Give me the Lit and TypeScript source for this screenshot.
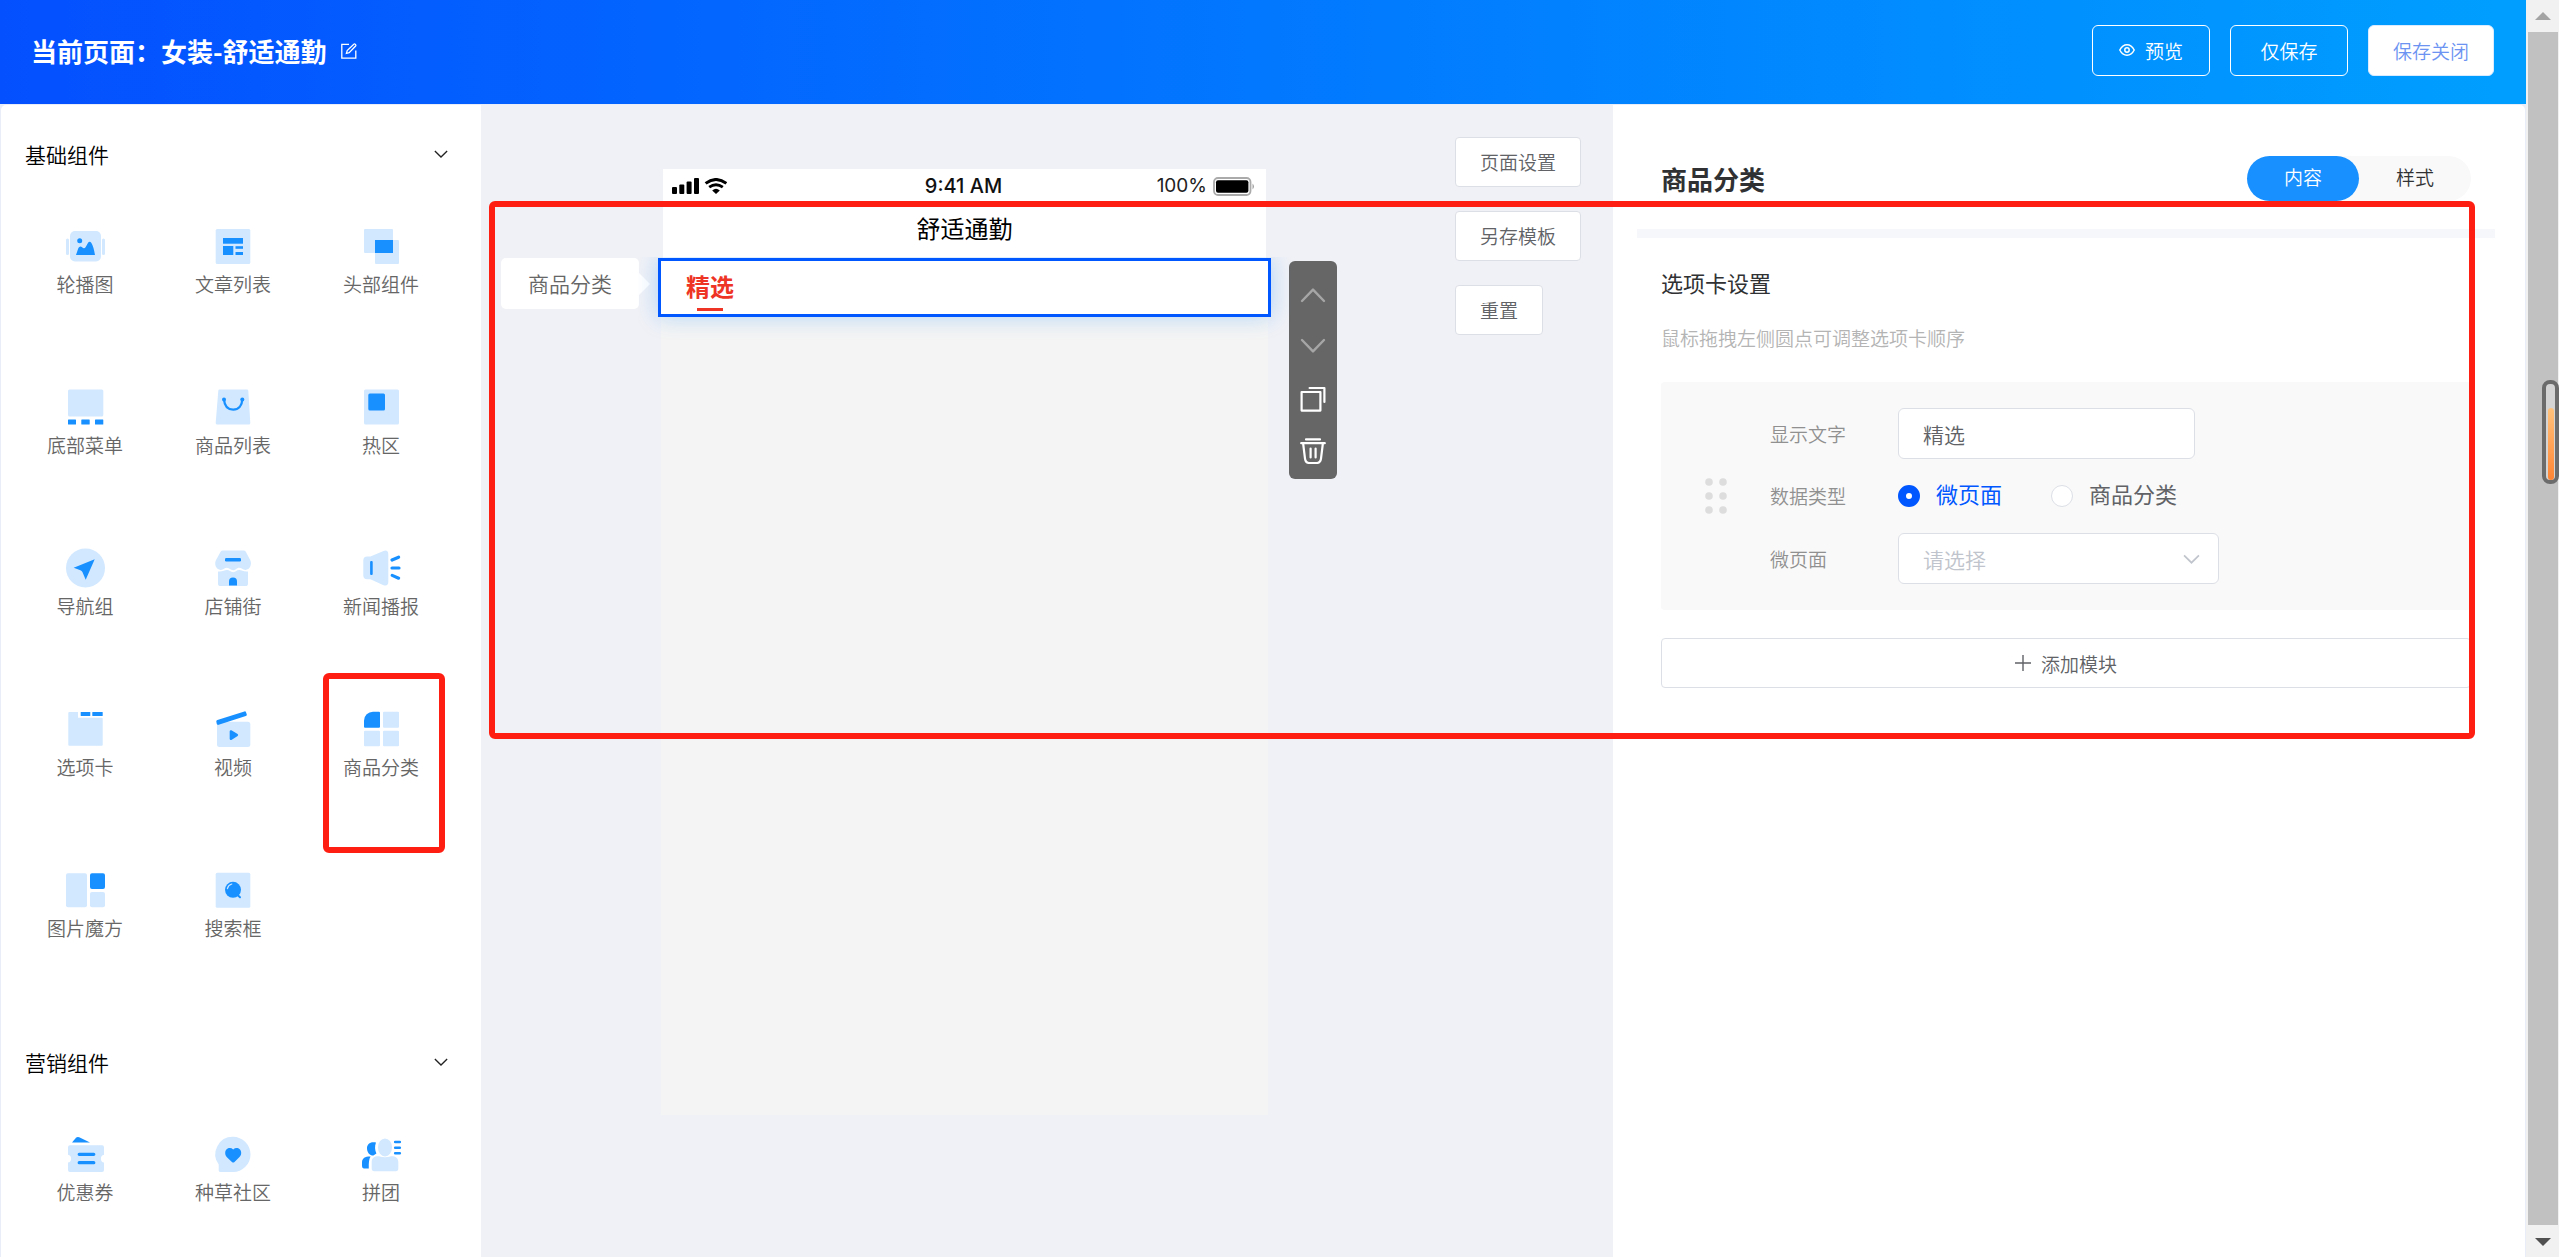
import { LitElement, html, svg, css, type TemplateResult } from "lit";
import { customElement, property, state } from "lit/decorators.js";
import { classMap } from "lit/directives/class-map.js";

type Tile = { name: string; icon: TemplateResult };

const basicTiles: Tile[] = [
  {
    name: "轮播图",
    icon: svg`
      <rect class="l" x="5" y="5" width="31" height="30.5" rx="5"/>
      <rect class="l" x="1" y="12.5" width="3" height="16.5" rx="1.5"/>
      <rect class="l" x="37" y="12.5" width="3" height="16.5" rx="1.5"/>
      <circle class="d" cx="14.7" cy="14.7" r="2.5"/>
      <path class="d" d="M11 29 13.4 22Q15 19 17.4 21.6 19.4 23.4 21 20.4L23.2 16.6Q24.8 14.6 26.4 17 28.6 20.6 30 29Z"/>`,
  },
  {
    name: "文章列表",
    icon: svg`
      <rect class="l" x="2.7" y="3" width="34.6" height="35" rx="1.5"/>
      <rect class="d" x="10" y="12" width="20" height="5.7"/>
      <rect class="d" x="10" y="20" width="10.3" height="9"/>
      <rect class="d" x="22.5" y="20.2" width="7.5" height="2.6"/>
      <rect class="d" x="22.5" y="26" width="7.5" height="3"/>`,
  },
  {
    name: "头部组件",
    icon: svg`
      <rect class="l" x="3" y="3" width="29" height="24" rx="1"/>
      <rect class="l" x="14" y="14" width="24" height="24" rx="1"/>
      <rect class="d" x="14" y="14" width="18" height="13"/>`,
  },
  {
    name: "底部菜单",
    icon: svg`
      <rect class="l" x="3" y="2.5" width="35.3" height="27" rx="1.5"/>
      <rect class="d" x="3" y="32.5" width="8" height="5" rx=".5"/>
      <rect class="d" x="16.3" y="32.5" width="8.4" height="5" rx=".5"/>
      <rect class="d" x="30" y="32.5" width="8.3" height="5" rx=".5"/>`,
  },
  {
    name: "商品列表",
    icon: svg`
      <path class="l" d="M6.6 2.5H34Q35.2 2.5 35.3 3.8L37.3 36Q37.3 37.5 35.8 37.5H4.2Q2.7 37.5 2.7 36L5.3 3.8Q5.4 2.5 6.6 2.5Z"/>
      <path class="ds" stroke-width="2.3" d="M11 12.5C11.5 19 15 22.6 20.2 22.6S29 19 29.3 12.5"/>
      <circle class="d" cx="11" cy="12.5" r="2"/><circle class="d" cx="29.3" cy="12.5" r="2"/>`,
  },
  {
    name: "热区",
    icon: svg`
      <rect class="l" x="3" y="2.5" width="35" height="35" rx="1.5"/>
      <rect class="d" x="7.3" y="6.5" width="16.7" height="17" rx="1.5"/>`,
  },
  {
    name: "导航组",
    icon: svg`
      <circle class="l" cx="20.5" cy="20" r="19.5"/>
      <path class="d" d="M29.7 11.2 8.7 19.8 15.4 22.3Q16.8 22.8 17.4 24L20.7 31.8Z"/>`,
  },
  {
    name: "店铺街",
    icon: svg`
      <path class="l" d="M9.8 2.5H30.6Q32 2.5 32.8 3.8L37.4 12.6C39 17 36.8 21.6 32.4 22 29.6 22 28.6 19.8 26.2 19.8 23.4 19.8 23 22.2 20.2 22.2S16.6 19.8 14 19.8C11.4 19.8 10.6 22 7.8 22 3.4 21.6 1 17 2.8 12.6L7.6 3.8Q8.4 2.5 9.8 2.5Z"/>
      <path class="l" d="M5 23.4C9 24.2 11.4 22 14 22S17.4 24.2 20.2 24.2 23.6 22 26.2 22 31 24.2 35 23.4V35.4Q35 38 32.4 38H7.6Q5 38 5 35.4Z"/>
      <rect class="d" x="12" y="10" width="16" height="3.4" rx="1.2"/>
      <path class="d" d="M16 37.6V33.4A4 4 0 0 1 24 33.4V37.6Z"/>`,
  },
  {
    name: "新闻播报",
    icon: svg`
      <path class="l" d="M2.3 12.5Q2.3 8.5 6.3 8.5H9.4L22.6 2.9Q27.3 1.6 27.3 6.4V33.8Q27.3 38.6 22.6 37.2L9.4 31.2H6.3Q2.3 31.2 2.3 27.2Z"/>
      <rect class="d" x="9.1" y="13" width="2.6" height="14" rx="1"/>
      <path class="ds" stroke-width="3.2" d="M31 12 37.6 9.2M31 20H38M31.2 27.4 37.6 30.2"/>`,
  },
  {
    name: "选项卡",
    icon: svg`
      <path class="l" d="M4.3 3H13V8.7H36.7Q37.7 8.7 37.7 9.7V35.7Q37.7 36.7 36.7 36.7H4.3Q3.3 36.7 3.3 35.7V4Q3.3 3 4.3 3Z"/>
      <rect class="d" x="15.7" y="3" width="9.6" height="4" rx=".5"/>
      <rect class="d" x="27.3" y="3" width="10.4" height="4" rx=".5"/>`,
  },
  {
    name: "视频",
    icon: svg`
      <rect class="l" x="4" y="12.7" width="33.3" height="25.3" rx="2.5"/>
      <path class="d" d="M3.3 12.4Q3.3 11.4 4.4 11L31.4 2.4Q32.6 2 33 3.2L33.8 5.4Q34 6.6 32.8 7L4.9 16Q3.4 15 3.3 12.4Z"/>
      <path class="d" d="M16.7 22.4Q16.8 20.8 18.4 21.3L24.6 25Q25.6 26 24.6 27L18.4 30.9Q16.8 31.4 16.7 29.8Z"/>`,
  },
  {
    name: "商品分类",
    icon: svg`
      <path class="d" d="M3 11.7A9 9 0 0 1 12 2.7H18Q19 2.7 19 3.7V17.7Q19 18.7 18 18.7H4Q3 18.7 3 17.7Z"/>
      <rect class="l" x="22" y="2.7" width="16" height="16" rx="1"/>
      <rect class="l" x="3" y="21.7" width="16" height="15.6" rx="1"/>
      <rect class="l" x="22" y="21.7" width="16" height="15.6" rx="1"/>`,
  },
  {
    name: "图片魔方",
    icon: svg`
      <rect class="l" x="1" y="3.3" width="21" height="34" rx="2"/>
      <rect class="d" x="25" y="3.3" width="15" height="15.6" rx="2"/>
      <rect class="l" x="25" y="22" width="15" height="15.3" rx="2"/>`,
  },
  {
    name: "搜索框",
    icon: svg`
      <rect class="l" x="2.7" y="2.7" width="34.6" height="35" rx="1.5"/>
      <circle class="d" cx="20" cy="19.8" r="8"/>
      <path class="ds" stroke-width="2" d="M24 24.4 27 27.2"/>
      <path class="ls" stroke-width="1.2" d="M14.4 18.6Q15.2 15 18.8 14"/>`,
  },
];

const marketingTiles: Tile[] = [
  {
    name: "优惠券",
    icon: svg`
      <path class="l" d="M5 11.3H37Q39 11.3 39 13.3V20.8A4 4 0 0 0 39 28.6V36Q39 38 37 38H5Q3 38 3 36V28.6A4 4 0 0 0 3 20.8V13.3Q3 11.3 5 11.3Z"/>
      <path class="d" d="M7 8.4 11 3.8Q12.3 2.4 14.2 3.2L25 8.4Z"/>
      <path class="ds" stroke-width="3.2" d="M14.2 20.3H28.8M14.2 28.7H28.8"/>`,
  },
  {
    name: "种草社区",
    icon: svg`
      <path class="l" d="M20 2.8A17.5 17.6 0 0 1 20 38H7Q5.7 38 5.7 36.6V30.4A17.4 17.4 0 0 1 20 2.8Z"/>
      <path class="d" d="M20.2 15.4C23.4 12.6 28.2 14.6 28.2 19 28.2 21.4 26.8 22.8 25 24.4L21.2 28.2Q20.2 29 19.2 28.2L15.2 24.4C13.4 22.8 12.2 21.4 12.2 19 12.2 14.6 17 12.6 20.2 15.4Z"/>`,
  },
  {
    name: "拼团",
    icon: svg`
      <path class="d" d="M15 8.6C13.6 12 13.8 16.4 15.4 19.4L12.4 21.6C8.4 21.4 6 18 6 14.4 6 10.4 9 7.4 15 8.6Z"/>
      <path class="d" d="M9.6 22.6C8 25 7.6 29 7.8 34.4H2.8Q1 34.2 1 32V28.4C1 24 4.6 22.4 9.6 22.6Z"/>
      <ellipse class="l" cx="24" cy="13.4" rx="7" ry="9"/>
      <path class="l" d="M18 22.2Q24 24.4 30 22.2C34.6 22 37.3 24 37.3 28V34.6Q37.3 37.2 34.8 37.2H13.2Q10.7 37.2 10.7 34.6V28C10.7 24 13.4 22 18 22.2Z"/>
      <path class="ds" stroke-width="2.6" d="M34.2 8H38.8M34.2 13.7H38.8M34.2 19.3H38.8"/>`,
  },
];

const chevronDown = svg`<path d="M1 1 8 8 15 1"/>`;

@customElement("tile-section")
class TileSection extends LitElement {
  @property() heading = "";
  @property({ attribute: false }) tiles: Tile[] = [];
  @state() private open = true;

  static styles = css`
    :host {
      display: block;
    }
    button {
      font: inherit;
      color: inherit;
      background: none;
      border: 0;
      padding: 0;
      cursor: pointer;
    }
    .head {
      display: flex;
      align-items: center;
      justify-content: space-between;
      width: 100%;
      height: 62px;
      padding: 0 33px 1px 24px;
      box-sizing: border-box;
      font-size: 21px;
      line-height: 30px;
      color: #000;
    }
    .chevron {
      width: 14px;
      height: 8px;
      fill: none;
      stroke: #222;
      stroke-width: 1.5;
    }
    .grid {
      display: grid;
      grid-template-columns: repeat(3, 1fr);
      grid-auto-rows: 161px;
      padding: 41px 26px 0 10px;
    }
    .tile {
      display: flex;
      flex-direction: column;
      align-items: center;
      gap: 4px;
      font-size: 19px;
      line-height: 28px;
      color: #666;
    }
    .icon {
      width: 40px;
      height: 40px;
      overflow: visible;
    }
    .l {
      fill: #d1e8ff;
    }
    .d {
      fill: #1890ff;
    }
    .ds,
    .ls {
      fill: none;
      stroke: #1890ff;
      stroke-linecap: round;
    }
    .ls {
      stroke: #d1e8ff;
    }
  `;

  render() {
    return html`
      <button class="head" aria-expanded=${this.open} @click=${() => (this.open = !this.open)}>
        <span>${this.heading}</span>
        <svg class="chevron" viewBox="0 0 16 9" aria-hidden="true">${chevronDown}</svg>
      </button>
      ${this.open
        ? html`<div class="grid">
            ${this.tiles.map(
              (t) => html`<button class="tile">
                <svg class="icon" viewBox="0 0 40 40" aria-hidden="true">${t.icon}</svg>
                <span>${t.name}</span>
              </button>`
            )}
          </div>`
        : null}
    `;
  }
}

@customElement("phone-preview")
class PhonePreview extends LitElement {
  static styles = css`
    :host {
      display: flex;
      align-items: flex-start;
    }
    .tag {
      position: relative;
      margin-top: 89px;
      padding: 0 27px 1px;
      line-height: 50px;
      font-size: 21px;
      color: #666;
      background: #fff;
      border-radius: 5px;
      white-space: nowrap;
    }
    .tag::after {
      content: "";
      position: absolute;
      left: 100%;
      top: 15px;
      border: 11px solid transparent;
      border-right-width: 0;
      border-left-color: #fff;
    }
    .phone {
      width: 613px;
      margin: 0 18px 0 19px;
    }
    .top {
      margin: 0 5px;
      background: #fff;
      height: 89px;
    }
    .status {
      display: grid;
      grid-template-columns: 1fr auto 1fr;
      align-items: center;
      height: 34px;
      padding: 0 11px 0 9px;
      font-family: Inter, "Liberation Sans", sans-serif;
    }
    .signal {
      width: 55px;
      height: 16px;
    }
    .time {
      font-size: 20px;
      font-weight: 500;
      line-height: 24px;
      color: #111;
    }
    .power {
      display: flex;
      align-items: center;
      justify-content: flex-end;
      gap: 6px;
      font-size: 19px;
      font-weight: 400;
      line-height: 24px;
      color: #222;
    }
    .battery {
      width: 42px;
      height: 19px;
    }
    .title {
      margin: 0;
      padding-top: 7px;
      font-size: 24px;
      font-weight: 400;
      line-height: 36px;
      text-align: center;
      color: #000;
    }
    .selected {
      display: flex;
      flex-direction: column;
      box-sizing: border-box;
      height: 59px;
      border: 3px solid #0057ff;
      background: #fff;
      padding: 7px 25px 0;
      box-shadow: 0 0 22px rgba(24, 144, 255, 0.3);
      clip-path: inset(-1px -20px -24px -20px);
      position: relative;
    }
    .tab {
      display: flex;
      flex-direction: column;
      align-items: center;
      align-self: flex-start;
      gap: 4px;
      font-size: 24px;
      font-weight: 700;
      line-height: 36px;
      color: #ee3424;
    }
    .tab::after {
      content: "";
      width: 26px;
      height: 3px;
      background: #ee3424;
    }
    .screen {
      margin: 0 3px;
      height: 798px;
      background: #f4f4f4;
    }
    .tools {
      display: flex;
      flex-direction: column;
      margin-top: 92px;
      padding: 8px 0 2px;
      background: #666;
      border-radius: 6px;
    }
    .tool {
      display: flex;
      align-items: center;
      justify-content: center;
      width: 48px;
      height: 52px;
      padding: 0;
      border: 0;
      background: none;
      cursor: pointer;
    }
    .tool svg {
      width: 26px;
      height: 26px;
      fill: none;
      stroke: #fff;
      stroke-width: 2.2;
      stroke-linecap: round;
      stroke-linejoin: round;
    }
    .tool:disabled svg {
      stroke: #a6a6a6;
      stroke-width: 2.4;
    }
  `;

  render() {
    return html`
      <div class="tag">商品分类</div>
      <div class="phone">
        <div class="top">
          <div class="status">
            <svg class="signal" viewBox="0 0 55 16" aria-hidden="true">
              <rect x="0" y="9" width="5" height="7" rx="1" />
              <rect x="7.3" y="6.5" width="5" height="9.5" rx="1" />
              <rect x="14.6" y="3.5" width="5" height="12.5" rx="1" />
              <rect x="22" y="0" width="5" height="16" rx="1" />
              <g fill="none" stroke="#000">
                <path stroke-width="3" d="M33.6 5.4Q44 -2.4 54.4 5.4" />
                <path stroke-width="2.8" d="M37.2 9.2Q44 4.2 50.8 9.2" />
              </g>
              <path d="M40.2 12.4Q44 9.2 47.8 12.4L44 16Z" />
            </svg>
            <span class="time">9:41 AM</span>
            <span class="power">
              <span>100%</span>
              <svg class="battery" viewBox="0 0 42 19" aria-hidden="true">
                <rect x="1" y="1" width="36.5" height="17" rx="4" fill="#fff" stroke="#aaa" stroke-width="1.8" />
                <rect x="3" y="3.2" width="32.4" height="12.6" rx="2" />
                <path d="M39.6 6.5Q42 9.5 39.6 12.5Z" fill="#888" />
              </svg>
            </span>
          </div>
          <h2 class="title">舒适通勤</h2>
        </div>
        <div class="selected"><span class="tab">精选</span></div>
        <div class="screen"></div>
      </div>
      <div class="tools">
        <button class="tool" disabled aria-label="上移">
          <svg viewBox="0 0 26 26"><path d="M2 19 13 7.6 24 19" /></svg>
        </button>
        <button class="tool" disabled aria-label="下移">
          <svg viewBox="0 0 26 26"><path d="M2 6 13 17.4 24 6" /></svg>
        </button>
        <button class="tool" aria-label="复制">
          <svg viewBox="0 0 26 26"><path d="M1.6 6H20.4V24.6H1.6ZM9.6 2H24.4V16" /></svg>
        </button>
        <button class="tool" aria-label="删除">
          <svg viewBox="0 0 26 26">
            <path d="M6 1.4H20M1.2 5.2H24.8M3.2 6 5 20.6Q5.6 25 9.4 25H16.6Q20.4 25 21 20.6L22.8 6M10.6 10.6V19.4M15.6 10.6V19.4" />
          </svg>
        </button>
      </div>
    `;
  }
}

@customElement("settings-panel")
class SettingsPanel extends LitElement {
  @state() private tab = "内容";
  @state() private kind = "微页面";

  static styles = css`
    :host {
      display: block;
      padding: 51px 30px 0 24px;
    }
    button,
    input,
    select {
      font: inherit;
      margin: 0;
      box-sizing: border-box;
    }
    .head {
      display: flex;
      justify-content: space-between;
      align-items: flex-start;
      padding: 0 24px 27px;
    }
    h1 {
      margin: 0;
      font-size: 26px;
      font-weight: 700;
      line-height: 46px;
      color: #303133;
    }
    .tabs {
      display: flex;
      border-radius: 23px;
      background: #f9f9f9;
    }
    .tabs button {
      width: 112px;
      height: 45px;
      padding: 0 0 5px;
      border: 0;
      border-radius: 23px;
      background: none;
      font-size: 19px;
      color: #303133;
      cursor: pointer;
    }
    .tabs .on {
      background: #1890ff;
      color: #fff;
    }
    .divider {
      height: 9px;
      background: #f5f7fa;
    }
    .body {
      padding: 27px 24px 0;
    }
    h2 {
      margin: 0;
      font-size: 22px;
      font-weight: 400;
      line-height: 34px;
      color: #303133;
    }
    .hint {
      margin: 24px 0 29px;
      font-size: 19px;
      line-height: 30px;
      color: #b4b4b4;
    }
    .card {
      display: flex;
      align-items: center;
      gap: 43px;
      padding: 26px 44px;
      background: #f9f9f9;
      border-radius: 4px;
    }
    .grip {
      width: 22px;
      height: 36px;
      fill: #ddd;
    }
    .form {
      flex: 1;
      display: grid;
      grid-template-columns: 128px 1fr;
      row-gap: 26px;
      align-items: center;
    }
    .name {
      font-size: 19px;
      line-height: 22px;
      color: #909090;
    }
    .field {
      height: 51px;
      width: 297px;
      padding: 0 24px;
      border: 1px solid #dcdfe6;
      border-radius: 6px;
      background: #fff;
      font-size: 21px;
      color: #606266;
      outline: 0;
    }
    .pick {
      display: grid;
      align-items: center;
      width: 321px;
    }
    .pick > * {
      grid-area: 1 / 1;
    }
    .pick .field {
      width: 100%;
      appearance: none;
      color: #c0c4cc;
    }
    .pick svg {
      justify-self: end;
      margin-right: 19px;
      width: 17px;
      height: 10px;
      fill: none;
      stroke: #c0c4cc;
      stroke-width: 1.6;
      pointer-events: none;
    }
    .radios {
      display: flex;
      gap: 49px;
      height: 22px;
      align-items: center;
    }
    .radio {
      display: flex;
      align-items: center;
      gap: 16px;
      font-size: 22px;
      font-weight: 400;
      line-height: 22px;
      color: #606266;
    }
    .radio span {
      padding-bottom: 6px;
    }
    .radio input {
      appearance: none;
      width: 22px;
      height: 22px;
      border: 1px solid #dcdfe6;
      border-radius: 50%;
      background: #fff;
    }
    .radio input:checked {
      border: 8px solid #0057ff;
    }
    .radio.on {
      color: #0057ff;
    }
    .add {
      display: flex;
      align-items: center;
      justify-content: center;
      gap: 10px;
      width: 100%;
      height: 50px;
      margin-top: 28px;
      border: 1px solid #dcdfe6;
      border-radius: 4px;
      background: #fff;
      font-size: 19px;
      color: #606266;
      cursor: pointer;
    }
    .add svg {
      width: 16px;
      height: 16px;
      stroke: #606266;
      stroke-width: 1.4;
    }
  `;

  render() {
    return html`
      <div class="head">
        <h1>商品分类</h1>
        <div class="tabs">
          ${["内容", "样式"].map(
            (t) => html`<button class=${classMap({ on: t === this.tab })} @click=${() => (this.tab = t)}>${t}</button>`
          )}
        </div>
      </div>
      <div class="divider"></div>
      <div class="body">
        <h2>选项卡设置</h2>
        <p class="hint">鼠标拖拽左侧圆点可调整选项卡顺序</p>
        <div class="card">
          <svg class="grip" viewBox="0 0 22 36" aria-hidden="true">
            ${[4, 18, 32].map(
              (y) => svg`<circle cx="4" cy=${y} r="3.8"/><circle cx="18" cy=${y} r="3.8"/>`
            )}
          </svg>
          <div class="form">
            <label class="name" for="text">显示文字</label>
            <input class="field" id="text" type="text" .value=${"精选"} />
            <span class="name" id="kind">数据类型</span>
            <div class="radios" role="radiogroup" aria-labelledby="kind">
              ${["微页面", "商品分类"].map(
                (k) => html`<label class=${classMap({ radio: true, on: k === this.kind })}>
                  <input type="radio" name="kind" .checked=${k === this.kind} @change=${() => (this.kind = k)} />
                  <span>${k}</span>
                </label>`
              )}
            </div>
            <label class="name" for="page">微页面</label>
            <div class="pick">
              <select class="field" id="page"><option>请选择</option></select>
              <svg viewBox="0 0 16 9" aria-hidden="true">${chevronDown}</svg>
            </div>
          </div>
        </div>
        <button class="add">
          <svg viewBox="0 0 16 16" aria-hidden="true"><path d="M8 0V16M0 8H16" /></svg>
          <span>添加模块</span>
        </button>
      </div>
    `;
  }
}

@customElement("app-root")
class AppRoot extends LitElement {
  static styles = css`
    :host {
      display: grid;
      grid-template-columns: minmax(0, 1fr) 33px;
      height: 100vh;
      position: relative;
      overflow: hidden;
      font-family: "Noto Sans CJK SC", "Noto Sans", sans-serif;
      font-weight: 350;
      background: #f0f1f6;
    }
    button {
      font: inherit;
      box-sizing: border-box;
      cursor: pointer;
    }
    .app {
      display: flex;
      flex-direction: column;
      min-height: 0;
    }
    .bar {
      display: flex;
      align-items: center;
      justify-content: space-between;
      height: 104px;
      padding: 0 32px 3px 31px;
      box-sizing: border-box;
      background: linear-gradient(90deg, #0450ff, #009fff);
      color: #fff;
      flex: none;
    }
    .page {
      display: flex;
      align-items: center;
      gap: 14px;
      font-size: 26px;
      font-weight: 700;
      line-height: 36px;
    }
    .edit {
      padding: 0;
      border: 0;
      background: none;
      display: flex;
    }
    .edit svg {
      width: 16px;
      height: 16px;
      fill: none;
      stroke: #fff;
      stroke-width: 1.3;
    }
    .actions {
      display: flex;
      gap: 20px;
    }
    .actions button {
      display: flex;
      align-items: center;
      justify-content: center;
      gap: 10px;
      min-width: 118px;
      height: 51px;
      padding: 0 24px 1px;
      border: 1px solid #fff;
      border-radius: 6px;
      background: none;
      font-size: 19px;
      color: #fff;
    }
    .actions .solid {
      background: #fff;
      border-color: #d9ecff;
      color: #6c93f2;
    }
    .eye {
      width: 16px;
      height: 12px;
      fill: none;
      stroke: #fff;
      stroke-width: 1.5;
    }
    .main {
      flex: 1;
      min-height: 0;
      display: grid;
      grid-template-columns: minmax(400px, 480fr) minmax(1040px, 1132fr) minmax(700px, 912fr);
      padding: 1px 1px 0;
      background: #e9edf8;
    }
    .side {
      padding-top: 18px;
      background: #fff;
      border-top-left-radius: 5px;
      overflow: hidden;
    }
    .canvas {
      display: flex;
      align-items: flex-start;
      justify-content: space-between;
      padding: 32px 32px 0 20px;
      background: #f0f1f6;
    }
    .preview {
      margin-top: 32px;
    }
    .ops {
      display: flex;
      flex-direction: column;
      align-items: flex-start;
      gap: 24px;
    }
    .ops button {
      height: 50px;
      padding: 0 24px 2px;
      border: 1px solid #dcdfe6;
      border-radius: 4px;
      background: #fff;
      font-size: 19px;
      color: #606266;
    }
    .panel {
      background: #fff;
      border-top-right-radius: 5px;
    }
    .scroll {
      display: flex;
      flex-direction: column;
      align-items: center;
      background: #f1f1f1;
    }
    .scroll svg {
      width: 16px;
      height: 32px;
      flex: none;
    }
    .thumb {
      flex: 1;
      width: 30px;
      background: #c1c1c1;
    }
    .gauge {
      position: absolute;
      right: 0;
      top: 380px;
      width: 17px;
      height: 104px;
      box-sizing: border-box;
      border: 4px solid #6b6b6b;
      border-radius: 8px;
      background: #d4d4d4;
      padding: 24px 1px 0 2px;
    }
    .level {
      height: 100%;
      border-radius: 3px;
      background: linear-gradient(#ffc27c, #ff8534);
    }
    .mark {
      position: absolute;
      box-sizing: border-box;
      border: 6px solid #ff1f12;
      border-radius: 6px;
      pointer-events: none;
    }
    .mark-tile {
      left: 323px;
      top: 673px;
      width: 122px;
      height: 180px;
    }
    .mark-work {
      left: 489px;
      right: 84px;
      top: 201px;
      height: 538px;
    }
  `;

  render() {
    return html`
      <div class="app">
        <header class="bar">
          <div class="page">
            <span>当前页面：女装-舒适通勤</span>
            <button class="edit" aria-label="编辑名称">
              <svg viewBox="0 0 16 16">
                <path d="M8 1.4H.8V15.2H14.8V7.4M5.4 10.4 6.2 7.6 12.8 1.2Q13.6.6 14.4 1.4T14.6 3L8.2 9.6Z" />
              </svg>
            </button>
          </div>
          <div class="actions">
            <button>
              <svg class="eye" viewBox="0 0 16 12" aria-hidden="true">
                <path d="M.8 6Q3.4 .8 8 .8T15.2 6Q12.6 11.2 8 11.2T.8 6Z" />
                <circle cx="8" cy="6" r="2.2" />
              </svg>
              <span>预览</span>
            </button>
            <button>仅保存</button>
            <button class="solid">保存关闭</button>
          </div>
        </header>
        <main class="main">
          <nav class="side">
            <tile-section heading="基础组件" .tiles=${basicTiles}></tile-section>
            <tile-section heading="营销组件" .tiles=${marketingTiles}></tile-section>
          </nav>
          <section class="canvas">
            <phone-preview class="preview"></phone-preview>
            <div class="ops">
              <button>页面设置</button>
              <button>另存模板</button>
              <button>重置</button>
            </div>
          </section>
          <settings-panel class="panel"></settings-panel>
        </main>
      </div>
      <div class="scroll" aria-hidden="true">
        <svg viewBox="0 0 16 32"><path d="M0 20 8 12 16 20Z" fill="#a3a3a3" /></svg>
        <div class="thumb"></div>
        <svg viewBox="0 0 16 32"><path d="M0 13H16L8 21Z" fill="#505050" /></svg>
      </div>
      <div class="gauge" aria-hidden="true"><div class="level"></div></div>
      <div class="mark mark-tile"></div>
      <div class="mark mark-work"></div>
    `;
  }
}
